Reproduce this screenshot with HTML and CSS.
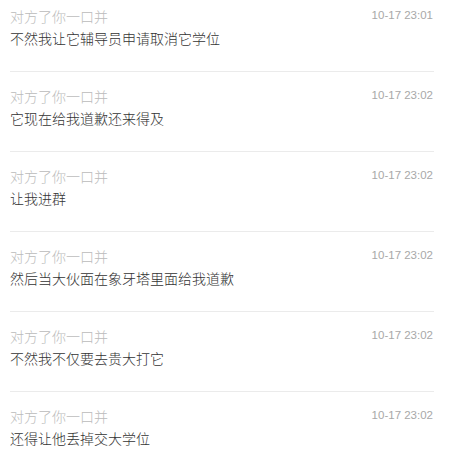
FILE: index.html
```html
<!DOCTYPE html>
<html lang="zh-CN">
<head>
    <meta charset="UTF-8">
    <meta name="viewport" content="width=device-width, initial-scale=1.0">
    <title>消息</title>
    <link rel="stylesheet" href="styles.css">
</head>
<body>
    <div id="list">
        <div class="item">
            <div class="head">
                <span class="name">对方了你一口并</span>
                <span class="time">10-17 23:01</span>
            </div>
            <p class="msg">不然我让它辅导员申请取消它学位</p>
        </div>
        <div class="item">
            <div class="head">
                <span class="name">对方了你一口并</span>
                <span class="time">10-17 23:02</span>
            </div>
            <p class="msg">它现在给我道歉还来得及</p>
        </div>
        <div class="item">
            <div class="head">
                <span class="name">对方了你一口并</span>
                <span class="time">10-17 23:02</span>
            </div>
            <p class="msg">让我进群</p>
        </div>
        <div class="item">
            <div class="head">
                <span class="name">对方了你一口并</span>
                <span class="time">10-17 23:02</span>
            </div>
            <p class="msg">然后当大伙面在象牙塔里面给我道歉</p>
        </div>
        <div class="item">
            <div class="head">
                <span class="name">对方了你一口并</span>
                <span class="time">10-17 23:02</span>
            </div>
            <p class="msg">不然我不仅要去贵大打它</p>
        </div>
        <div class="item">
            <div class="head">
                <span class="name">对方了你一口并</span>
                <span class="time">10-17 23:02</span>
            </div>
            <p class="msg">还得让他丢掉交大学位</p>
        </div>
    </div>
</body>
</html>
```
FILE: styles.css
```css
body {
    margin: 0;
    padding: 0;
    background: #fff;
    font-family: "Liberation Sans", "Noto Sans CJK SC", sans-serif;
}

#list {
    padding: 0 15px 0 10px;
}

.item {
    padding: 15px 0 20px;
    border-bottom: 1px solid #ebebeb;
}

.item:first-child {
    padding-top: 7px;
}

.item:last-child {
    border-bottom: none;
}

.head {
    display: flex;
    justify-content: space-between;
    align-items: flex-start;
    height: 20px;
}

.name {
    font-size: 14px;
    font-weight: 300;
    line-height: 20px;
    color: #bbb;
}

.time {
    font-size: 11.5px;
    line-height: 16px;
    color: #a8a8a8;
    padding-right: 1px;
}

.msg {
    margin: 0;
    font-size: 14px;
    font-weight: 300;
    line-height: 24px;
    color: #333;
}
```
